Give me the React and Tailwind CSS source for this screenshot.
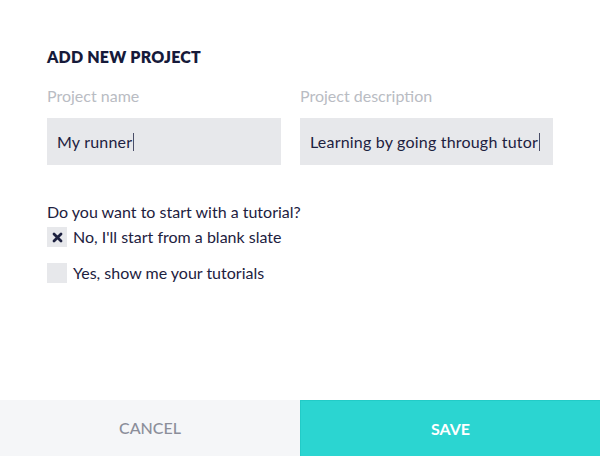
export default function App() {
  return (
    <div
      className="flex h-[456px] w-[600px] flex-col bg-white text-[#1d2140]"
      style={{ fontFamily: 'Lato, "Open Sans", sans-serif' }}
    >
      <div className="flex-1 px-[47px] pt-[45px]">
        <h1 className="text-[16px] font-extrabold tracking-[0.2px] text-[#161a3a]">ADD NEW PROJECT</h1>

        <div className="mt-[17px] grid grid-cols-[234px_253px] gap-x-[19px]">
          <div>
            <div className="text-[16px] leading-[20px] text-[#b9bcc3]">Project name</div>
            <div className="mt-[12px] flex h-[47px] items-center bg-[#e7e8eb] px-[10px] text-[16px] tracking-[0.2px]">
              My runner<span className="ml-px h-[18px] w-px bg-[#4a4e68]" />
            </div>
          </div>
          <div>
            <div className="text-[16px] leading-[20px] text-[#b9bcc3]">Project description</div>
            <div className="mt-[12px] flex h-[47px] items-center bg-[#e7e8eb] px-[10px] text-[16px] tracking-[0.2px]">
              Learning by going through tutor<span className="ml-px h-[18px] w-px bg-[#4a4e68]" />
            </div>
          </div>
        </div>

        <div className="mt-[37px] text-[16px] leading-[20px]">Do you want to start with a tutorial?</div>
        <div className="mt-[5px] flex items-center gap-[6px]">
          <span className="flex h-[20px] w-[20px] items-center justify-center bg-[#e7e8eb]">
            <svg width="11" height="11" viewBox="0 0 11 11">
              <path d="M2 2L9 9M9 2L2 9" stroke="#1d2140" strokeWidth="2.8" strokeLinecap="round" />
            </svg>
          </span>
          <span className="text-[16px] leading-[20px]">No, I'll start from a blank slate</span>
        </div>
        <div className="mt-[16px] flex items-center gap-[6px]">
          <span className="h-[20px] w-[20px] bg-[#e7e8eb]" />
          <span className="text-[16px] leading-[20px]">Yes, show me your tutorials</span>
        </div>
      </div>

      <div className="grid h-[56px] grid-cols-[300px_300px]">
        <button type="button" className="bg-[#f5f6f8] text-[16px] font-medium text-[#8b8e9a]">
          CANCEL
        </button>
        <button type="button" className="border-t border-l border-[#22cbc7] bg-[#2bd5d1] text-[16px] font-bold text-white">
          SAVE
        </button>
      </div>
    </div>
  )
}
